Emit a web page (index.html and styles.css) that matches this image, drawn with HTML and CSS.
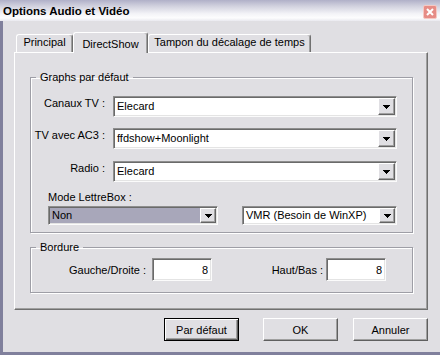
FILE: index.html
```html
<!DOCTYPE html>
<html>
<head>
  <meta charset="utf-8">
  <title>Options Audio et Vidéo</title>
  <link rel="stylesheet" href="styles.css">
</head>
<body>
  <div class="window">
    <div class="titlebar">
      <span class="title">Options Audio et Vidéo</span>
      <span class="close-btn">
        <svg width="14" height="14" viewBox="0 0 14 14">
          <rect x="0.5" y="0.5" width="13" height="13" rx="1.5" fill="#e68c86" stroke="#f5c8c3"/>
          <path d="M4 4L10 10M10 4L4 10" stroke="#fff" stroke-width="2"/>
        </svg>
      </span>
    </div>
    <div class="client">
      <div class="tabs">
        <div class="tab tab-principal">Principal</div>
        <div class="tab tab-directshow selected">DirectShow</div>
        <div class="tab tab-tampon">Tampon du décalage de temps</div>
      </div>
      <div class="tab-panel">
        <fieldset class="group graphs">
          <legend>Graphs par défaut</legend>
          <div class="field-row">
            <label class="field-label">Canaux TV :</label>
            <div class="combo wide">
              <span class="combo-text">Elecard</span>
              <span class="combo-btn"><svg width="7" height="4" viewBox="0 0 7 4"><path d="M0 0h7v1h-1v1h-1v1h-1v1h-1v-1h-1v-1h-1v-1h-1z"/></svg></span>
            </div>
          </div>
          <div class="field-row row-ac3">
            <label class="field-label">TV avec AC3 :</label>
            <div class="combo wide">
              <span class="combo-text">ffdshow+Moonlight</span>
              <span class="combo-btn"><svg width="7" height="4" viewBox="0 0 7 4"><path d="M0 0h7v1h-1v1h-1v1h-1v1h-1v-1h-1v-1h-1v-1h-1z"/></svg></span>
            </div>
          </div>
          <div class="field-row row-radio">
            <label class="field-label">Radio :</label>
            <div class="combo wide">
              <span class="combo-text">Elecard</span>
              <span class="combo-btn"><svg width="7" height="4" viewBox="0 0 7 4"><path d="M0 0h7v1h-1v1h-1v1h-1v1h-1v-1h-1v-1h-1v-1h-1z"/></svg></span>
            </div>
          </div>
          <div class="lettrebox-label">Mode LettreBox :</div>
          <div class="lettrebox-row">
            <div class="combo small mode-combo">
              <span class="combo-text">Non</span>
              <span class="combo-btn"><svg width="7" height="4" viewBox="0 0 7 4"><path d="M0 0h7v1h-1v1h-1v1h-1v1h-1v-1h-1v-1h-1v-1h-1z"/></svg></span>
            </div>
            <div class="combo small vmr-combo">
              <span class="combo-text">VMR (Besoin de WinXP)</span>
              <span class="combo-btn"><svg width="7" height="4" viewBox="0 0 7 4"><path d="M0 0h7v1h-1v1h-1v1h-1v1h-1v-1h-1v-1h-1v-1h-1z"/></svg></span>
            </div>
          </div>
        </fieldset>
        <fieldset class="group bordure">
          <legend>Bordure</legend>
          <div class="border-row">
            <label class="lr-label">Gauche/Droite :</label>
            <input class="num-input lr-input" type="text" value="8">
            <label class="hb-label">Haut/Bas :</label>
            <input class="num-input hb-input" type="text" value="8">
          </div>
        </fieldset>
      </div>
      <div class="buttons">
        <button class="default-button">Par défaut</button>
        <button class="ok-button">OK</button>
        <button>Annuler</button>
      </div>
    </div>
  </div>
</body>
</html>
```

FILE: styles.css
```css
* {
  box-sizing: border-box;
}
body {
  margin: 0;
  font-family: "Liberation Sans", Arial, sans-serif;
  font-size: 11px;
  color: #000;
  background-color: #e0dfe3;
}
.window {
  width: 440px;
  height: 355px;
  display: flex;
  flex-direction: column;
  background-color: #e0dfe3;
}
.titlebar {
  height: 21px;
  display: flex;
  justify-content: space-between;
  align-items: flex-start;
  padding: 0 3px;
  background: linear-gradient(#b0b0c8 0%, #d2d2df 30%, #f3f3f7 65%, #fdfdfe 85%, #e9e9ef 100%);
}
.title {
  font-weight: bold;
  font-size: 11.5px;
  line-height: 15px;
  padding-top: 4px;
}
.close-btn {
  margin-top: 5px;
  width: 14px;
  height: 14px;
}
.close-btn svg {
  display: block;
}
.client {
  flex: 1;
  border-left: 3px solid #80809c;
  border-bottom: 3px solid #80809c;
  padding: 11px 12px 0 11px;
}

/* onglets */
.tabs {
  display: flex;
  align-items: flex-end;
  padding-left: 2px;
  position: relative;
  z-index: 1;
}
.tab {
  line-height: 15px;
  padding: 0 0 2px;
  text-align: center;
  white-space: nowrap;
  border-top: 1px solid #fff;
  border-left: 1px solid #fff;
  border-right: 1px solid #707070;
  box-shadow: inset -1px 0 #a0a0a0;
  border-radius: 3px 3px 0 0;
  background-color: #e0dfe3;
}
.tab.selected {
  padding: 4px 0 1px;
  margin-bottom: -1px;
}
.tab-principal {
  width: 57px;
}
.tab-directshow {
  width: 75px;
}
.tab-tampon {
  width: 163px;
}
.tab-panel {
  height: 258px;
  border-top: 1px solid #fff;
  border-left: 1px solid #fff;
  border-right: 1px solid #707070;
  border-bottom: 1px solid #707070;
  box-shadow: inset -1px -1px #a0a0a0;
  padding: 17px 14px 0 15px;
}

/* groupes */
.group {
  margin: 0;
  min-width: 0;
  border: 1px solid #9e9ea6;
  box-shadow: 1px 1px 0 #fff, inset 1px 1px 0 #fff;
}
.group legend {
  margin-left: 5px;
  padding: 0 4px;
  line-height: 15px;
}
.graphs {
  padding: 11px 15px 7px 0;
}
.bordure {
  margin-top: 7px;
  padding: 3px 15px 11px 0;
}
.field-row {
  display: flex;
  align-items: flex-start;
  height: 21px;
}
.row-ac3 {
  margin-top: 11px;
}
.row-radio {
  margin-top: 12px;
}
.field-label {
  width: 74px;
  margin-right: 8px;
  text-align: right;
  line-height: 15px;
  white-space: nowrap;
}
.lettrebox-label {
  margin: 8px 0 0 17px;
  line-height: 15px;
}
.lettrebox-row {
  display: flex;
  margin: 1px 0 0 17px;
}

/* listes deroulantes */
.combo {
  display: flex;
  background-color: #fff;
  border-top: 1px solid #8e8e8e;
  border-left: 1px solid #8e8e8e;
  border-right: 1px solid #fbfbfb;
  border-bottom: 1px solid #fbfbfb;
  box-shadow: inset 1px 1px #6a6a6a, inset -1px -1px #e4e4e4;
  padding: 1px;
}
.combo.wide {
  width: 284px;
  height: 21px;
  line-height: 17px;
}
.combo.small {
  height: 19px;
  line-height: 15px;
}
.mode-combo {
  width: 170px;
  background-color: #a8a7ba;
}
.vmr-combo {
  width: 155px;
  margin-left: 24px;
}
.combo-text {
  flex: 1;
  padding-left: 2px;
  white-space: nowrap;
  overflow: hidden;
}
.combo-btn {
  display: flex;
  align-items: center;
  justify-content: center;
  width: 17px;
  background-color: #e0dfe3;
  border-top: 1px solid #fff;
  border-left: 1px solid #fff;
  border-right: 1px solid #646464;
  border-bottom: 1px solid #646464;
  box-shadow: inset -1px -1px #a0a0a0;
}
.combo.small .combo-btn {
  width: 16px;
}
.combo-btn svg {
  display: block;
}

/* bordure */
.border-row {
  display: flex;
  align-items: center;
}
.lr-label {
  width: 115px;
  text-align: right;
}
.hb-label {
  width: 111px;
  text-align: right;
}
.num-input {
  width: 60px;
  height: 23px;
  font: inherit;
  text-align: right;
  padding: 0 3px;
  background-color: #fff;
  border-top: 1px solid #8e8e8e;
  border-left: 1px solid #8e8e8e;
  border-right: 1px solid #fbfbfb;
  border-bottom: 1px solid #fbfbfb;
  box-shadow: inset 1px 1px #6a6a6a, inset -1px -1px #e4e4e4;
  outline: none;
}
.lr-input {
  margin-left: 6px;
}
.hb-input {
  margin-left: 3px;
}

/* boutons */
.buttons {
  display: flex;
  justify-content: flex-end;
  margin-top: 8px;
}
button {
  width: 75px;
  height: 23px;
  padding: 0;
  font: inherit;
  color: #000;
  background-color: #e0dfe3;
  border-top: 1px solid #fff;
  border-left: 1px solid #fff;
  border-right: 1px solid #5f5f5f;
  border-bottom: 1px solid #5f5f5f;
  box-shadow: inset -1px -1px #a0a0a0;
}
.default-button {
  border: 1px solid #000;
  box-shadow: inset 1px 1px #fff, inset -1px -1px #5f5f5f, inset -2px -2px #a0a0a0;
  margin-right: 24px;
}
.ok-button {
  margin-right: 15px;
}
```
